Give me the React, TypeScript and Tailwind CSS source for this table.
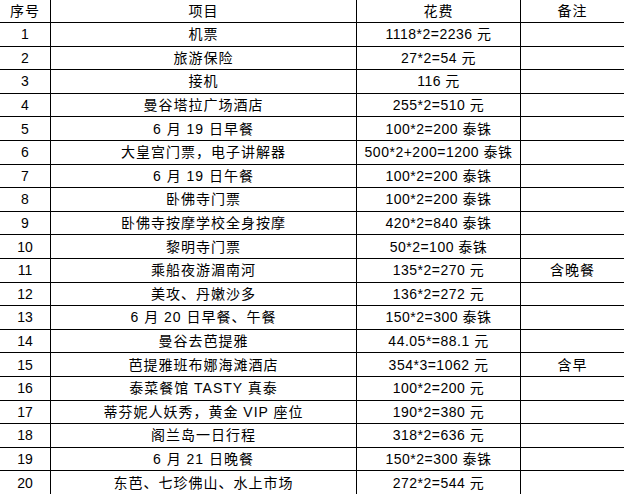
import React from 'react';

interface Row {
  no: string;
  item: string;
  cost: string;
  note?: string;
}

const ROWS: Row[] = [
  { no: '1', item: '机票', cost: '1118*2=2236 元' },
  { no: '2', item: '旅游保险', cost: '27*2=54 元' },
  { no: '3', item: '接机', cost: '116 元' },
  { no: '4', item: '曼谷塔拉广场酒店', cost: '255*2=510 元' },
  { no: '5', item: '6 月 19 日早餐', cost: '100*2=200 泰铢' },
  { no: '6', item: '大皇宫门票，电子讲解器', cost: '500*2+200=1200 泰铢' },
  { no: '7', item: '6 月 19 日午餐', cost: '100*2=200 泰铢' },
  { no: '8', item: '卧佛寺门票', cost: '100*2=200 泰铢' },
  { no: '9', item: '卧佛寺按摩学校全身按摩', cost: '420*2=840 泰铢' },
  { no: '10', item: '黎明寺门票', cost: '50*2=100 泰铢' },
  { no: '11', item: '乘船夜游湄南河', cost: '135*2=270 元', note: '含晚餐' },
  { no: '12', item: '美攻、丹嫩沙多', cost: '136*2=272 元' },
  { no: '13', item: '6 月 20 日早餐、午餐', cost: '150*2=300 泰铢' },
  { no: '14', item: '曼谷去芭提雅', cost: '44.05*=88.1 元' },
  { no: '15', item: '芭提雅班布娜海滩酒店', cost: '354*3=1062 元', note: '含早' },
  { no: '16', item: '泰菜餐馆 TASTY 真泰', cost: '100*2=200 元' },
  { no: '17', item: '蒂芬妮人妖秀，黄金 VIP 座位', cost: '190*2=380 元' },
  { no: '18', item: '阁兰岛一日行程', cost: '318*2=636 元' },
  { no: '19', item: '6 月 21 日晚餐', cost: '150*2=300 泰铢' },
  { no: '20', item: '东芭、七珍佛山、水上市场', cost: '272*2=544 元' },
];

const cell = 'flex items-center justify-center border-b border-black';

export default function App() {
  return (
    <div className="w-[624px] h-[494px] overflow-hidden bg-white text-black text-[14px] leading-none [font-family:'Liberation_Sans','Noto_Sans_CJK_SC',sans-serif]">
      <div className="grid grid-cols-[51px_306px_164px_103px] grid-rows-[23px_repeat(20,23.6px)]">
        <div className={`${cell} border-r tracking-[1px]`}>序号</div>
        <div className={`${cell} border-r tracking-[1px]`}>项目</div>
        <div className={`${cell} border-r tracking-[1px]`}>花费</div>
        <div className={`${cell} tracking-[1px]`}>备注</div>
        {ROWS.map((r) => (
          <React.Fragment key={r.no}>
            <div className={`${cell} border-r`}>{r.no}</div>
            <div className={`${cell} border-r tracking-[1px]`}>{r.item}</div>
            <div className={`${cell} border-r tracking-[0.5px]`}>{r.cost}</div>
            <div className={`${cell} tracking-[1px]`}>{r.note ?? ''}</div>
          </React.Fragment>
        ))}
      </div>
    </div>
  );
}
